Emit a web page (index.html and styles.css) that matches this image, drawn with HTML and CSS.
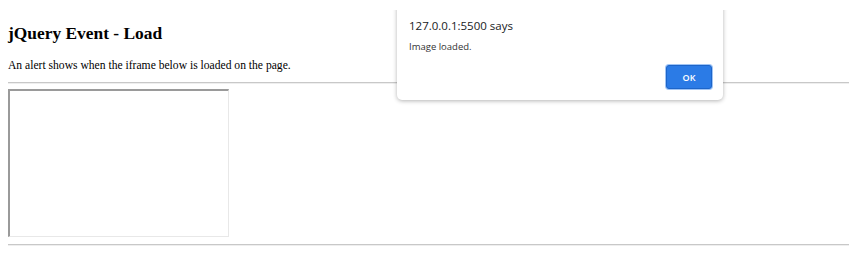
FILE: index.html
```html
<!DOCTYPE html>
<html>
<head>
<meta charset="utf-8">
<link rel="stylesheet" href="styles.css">
</head>
<body>
<h1 class="title">jQuery Event - Load</h1>
<p class="desc">An alert shows when the iframe below is loaded on the page.</p>
<hr class="rule">
<div class="frame"></div>
<hr class="rule">
<div class="dialog">
  <div class="dialog-title">127.0.0.1:5500 says</div>
  <div class="dialog-msg">Image loaded.</div>
  <div class="dialog-actions"><button class="ok">OK</button></div>
</div>
</body>
</html>
```
FILE: styles.css
```css
html, body { margin: 0; padding: 0; background: #fff; }
body { padding: 0 0 0 8px; font-family: "Liberation Serif", serif; color: #000; }
.title { font-size: 17.4px; font-weight: bold; margin: 0; padding-top: 22px; line-height: 22px; }
.desc { font-size: 11.6px; margin: 0; padding-top: 14px; line-height: 15px; }
.rule { margin: 9px 0 0 0; border: 0; border-top: 1px solid #c8c8c8; border-bottom: 1px solid #eee; height: 0; }
.frame { margin-top: 5px; width: 218px; height: 145px; border: 1px solid #e8e8e8; border-top: 2px solid #9a9a9a; border-left: 2px solid #9a9a9a; }
.frame + .rule { margin-top: 7px; }
.dialog { position: absolute; left: 397px; top: -10px; width: 326px; height: 110px; background: #fff; border-radius: 0 0 5px 5px; box-shadow: 0 1px 4px rgba(0,0,0,0.3); clip-path: inset(20px -10px -10px -10px); box-sizing: border-box; padding: 28px 12px 0 12px; font-family: "Open Sans", "Noto Sans", sans-serif; color: #202124; }
.dialog-title { font-size: 11.5px; line-height: 16px; }
.dialog-msg { font-size: 9.5px; line-height: 14px; margin-top: 6px; color: #333; }
.dialog-actions { display: flex; justify-content: flex-end; margin-top: 11px; }
.ok { width: 46px; height: 24px; background: #2b7be6; color: #fff; border: 1px solid #1d65c9; border-radius: 3px; box-shadow: 0 0 0 1px #9fc4f5; font-family: "Open Sans", sans-serif; font-size: 9px; font-weight: 600; margin-right: -1px; }
```
